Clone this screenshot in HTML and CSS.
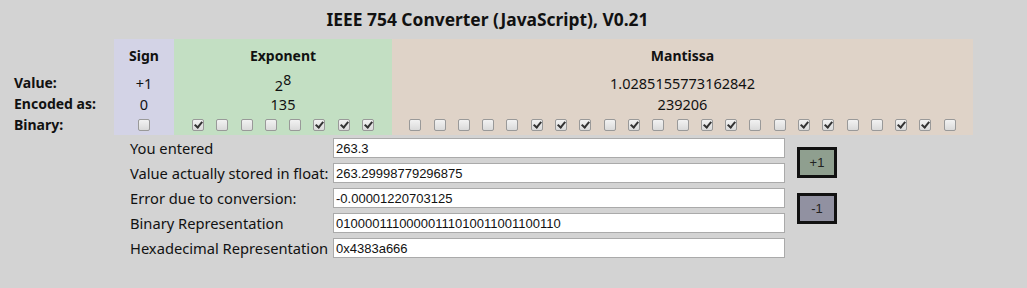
FILE: index.html
```html
<!DOCTYPE html>
<html lang="en">
<head>
    <meta charset="UTF-8">
    <title>IEEE 754 Converter</title>
    <link rel="stylesheet" href="styles.css">
</head>
<body>
    <div class="page">
        <h1 class="title">IEEE 754 Converter (JavaScript), V0.21</h1>
        <div class="bits">
            <div class="label"></div>
            <div class="sign head">Sign</div>
            <div class="exp head">Exponent</div>
            <div class="man head">Mantissa</div>

            <div class="label">Value:</div>
            <div class="sign">+1</div>
            <div class="exp"><span class="power">2<sup>8</sup></span></div>
            <div class="man">1.0285155773162842</div>

            <div class="label">Encoded as:</div>
            <div class="sign">0</div>
            <div class="exp">135</div>
            <div class="man">239206</div>

            <div class="label">Binary:</div>
            <div class="sign boxes"><span class="bit"></span></div>
            <div class="exp boxes">
                <span class="bit on"></span><span class="bit"></span><span class="bit"></span><span class="bit"></span>
                <span class="bit"></span><span class="bit on"></span><span class="bit on"></span><span class="bit on"></span>
            </div>
            <div class="man boxes">
                <span class="bit"></span><span class="bit"></span><span class="bit"></span><span class="bit"></span>
                <span class="bit"></span><span class="bit on"></span><span class="bit on"></span><span class="bit on"></span>
                <span class="bit"></span><span class="bit on"></span><span class="bit"></span><span class="bit"></span>
                <span class="bit on"></span><span class="bit on"></span><span class="bit"></span><span class="bit"></span>
                <span class="bit on"></span><span class="bit on"></span><span class="bit"></span><span class="bit"></span>
                <span class="bit on"></span><span class="bit on"></span><span class="bit"></span>
            </div>
        </div>

        <div class="io">
            <div class="fields">
                <label>You entered</label>
                <input type="text" value="263.3">
                <label>Value actually stored in float:</label>
                <input type="text" value="263.29998779296875">
                <label>Error due to conversion:</label>
                <input type="text" value="-0.00001220703125">
                <label>Binary Representation</label>
                <input type="text" value="01000011100000111010011001100110">
                <label>Hexadecimal Representation</label>
                <input type="text" value="0x4383a666">
            </div>
            <div class="steps">
                <button class="step plus">+1</button>
                <button class="step minus">-1</button>
            </div>
        </div>
    </div>
</body>
</html>
```

FILE: styles.css
```css
body {
    margin: 0;
    background-color: #d3d3d3;
    font-family: "Noto Sans", Arial, sans-serif;
    color: #111;
}
.page {
    width: 965px;
    margin-left: 8px;
}
.title {
    margin: 0;
    height: 39px;
    line-height: 39px;
    text-align: center;
    font-size: 17.4px;
    font-weight: bold;
    padding-right: 6px;
}

/* bit table */
.bits {
    display: grid;
    grid-template-columns: 106px 60px 218px 581px;
    grid-template-rows: 33px 21px 21px 21px;
}
.bits > div {
    display: flex;
    align-items: center;
    justify-content: center;
    font-size: 14.5px;
}
.bits .label {
    justify-content: flex-start;
    padding-left: 6px;
    font-size: 14px;
    font-weight: bold;
}
.bits .head {
    font-size: 14px;
    font-weight: bold;
}
.sign {
    background-color: #d3d3e6;
}
.exp {
    background-color: #c3dfc3;
}
.man {
    background-color: #dfd3c8;
}
.power {
    padding-top: 5px;
}
.power sup {
    font-size: 14px;
    vertical-align: 6px;
    line-height: 0;
}
.boxes {
    gap: 12.3px;
}
.bit {
    position: relative;
    width: 12px;
    height: 12px;
    box-sizing: border-box;
    border: 1px solid #999;
    border-radius: 2px;
    background: linear-gradient(#f2f2f2, #dadada);
}
.bit.on::after {
    content: "";
    position: absolute;
    left: 3px;
    top: 0px;
    width: 3px;
    height: 6px;
    border-right: 2px solid #333;
    border-bottom: 2px solid #333;
    transform: rotate(40deg);
}

/* lower form */
.io {
    display: flex;
    margin-top: 3px;
    padding-left: 122px;
}
.fields {
    display: grid;
    grid-template-columns: 203px 452px;
    grid-auto-rows: 20px;
    row-gap: 5px;
}
.fields label {
    font-size: 14.7px;
    line-height: 20px;
    white-space: nowrap;
}
.fields input {
    box-sizing: border-box;
    height: 20px;
    margin: 0;
    padding: 0 2px;
    border: 1px solid #aaa;
    background: white;
    font-family: "Liberation Sans", Arial, sans-serif;
    font-size: 13px;
    color: #111;
}
.steps {
    display: flex;
    flex-direction: column;
    gap: 15px;
    margin-left: 12px;
    padding-top: 9px;
}
.step {
    width: 40px;
    height: 31px;
    border: 3px solid #111;
    padding: 0;
    font-family: "Liberation Sans", Arial, sans-serif;
    font-size: 13px;
    color: #222;
}
.plus {
    background-color: #8f9f8f;
}
.minus {
    background-color: #9191a1;
}
```
